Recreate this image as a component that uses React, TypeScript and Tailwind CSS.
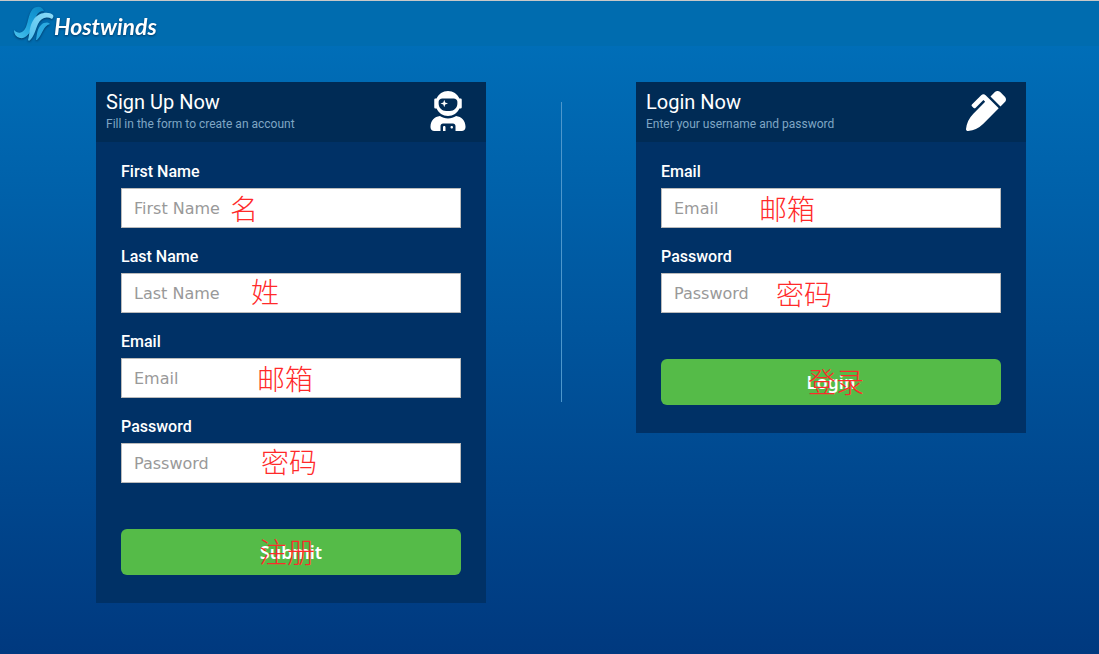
import { useId, type ReactNode } from "react";
import { FaPenAlt, FaUserAstronaut } from "react-icons/fa";

type FieldProps = {
  label: string;
  note: string;
  notePosition: string;
  type?: string;
};

const noteStyle =
  "pointer-events-none absolute text-[28px] leading-8 font-light whitespace-nowrap text-[#ff2a2a] font-['Noto_Sans_CJK_SC',sans-serif]";

function Field({ label, note, notePosition, type = "text" }: FieldProps) {
  const id = useId();
  return (
    <div className="flex flex-col gap-1">
      <label htmlFor={id} className="text-base leading-6 font-medium text-white">
        {label}
      </label>
      <div className="relative">
        <input
          id={id}
          type={type}
          placeholder={label}
          className="block h-10 w-full border border-[#bbbbbb] bg-white px-3 font-['DejaVu_Sans',sans-serif] text-base text-[#555555] outline-none placeholder:text-[#999999]"
        />
        <span className={`${noteStyle} ${notePosition}`}>{note}</span>
      </div>
    </div>
  );
}

type CardProps = {
  title: string;
  subtitle: string;
  icon: ReactNode;
  action: string;
  actionNote: string;
  actionNotePosition: string;
  children: ReactNode;
};

function Card({ title, subtitle, icon, action, actionNote, actionNotePosition, children }: CardProps) {
  return (
    <section className="bg-[#003166]">
      <header className="flex h-[60px] items-center justify-between bg-[#002b55] pr-5 pl-[10px]">
        <div>
          <h2 className="text-xl leading-6 text-white">{title}</h2>
          <p className="text-xs leading-5 text-[#7fa6c4]">{subtitle}</p>
        </div>
        <span className="pb-0.5 text-[40px] text-white">{icon}</span>
      </header>
      <form className="px-[25px] pt-[18px] pb-7" onSubmit={(event) => event.preventDefault()}>
        <div className="flex flex-col gap-[17px]">{children}</div>
        <div className="relative mt-[46px]">
          <button
            type="submit"
            className="h-[46px] w-full rounded-md bg-[#55bb48] font-['Noto_Sans',sans-serif] text-lg font-semibold text-white"
          >
            {action}
          </button>
          <span className={`${noteStyle} ${actionNotePosition}`}>{actionNote}</span>
        </div>
      </form>
    </section>
  );
}

function Logo() {
  return (
    <a href="#" aria-label="Hostwinds" className="flex items-center drop-shadow-[0px_1px_1px_rgba(0,20,50,0.6)]">
      <svg width="42" height="38" viewBox="0 0 42 38" aria-hidden="true">
        <defs>
          <linearGradient id="wave-dark" x1="0" y1="1" x2="1" y2="0">
            <stop offset="0" stopColor="#4cc3ee" />
            <stop offset="0.5" stopColor="#1aa0da" />
            <stop offset="1" stopColor="#0a86c4" />
          </linearGradient>
          <linearGradient id="wave-light" x1="0" y1="1" x2="1" y2="0">
            <stop offset="0" stopColor="#4fc0ee" />
            <stop offset="1" stopColor="#8edcf8" />
          </linearGradient>
        </defs>
        <path
          d="M2 25C6 29 11 29 14 22C17 15 17 3 25 2C28 1 31 3 32 6C26 6 24 10 22 18C19 29 13 34 8 33C4 32 2 29 2 25Z"
          fill="url(#wave-dark)"
        />
        <path
          d="M16 35C18 28 17 21 22 14C27 7 37 6 41 10C42 11 41 13 40 14C34 11 29 13 26 19C23 26 22 32 17 36Z"
          fill="url(#wave-light)"
        />
        <path d="M24 35C25 29 25 24 29 20C32 17 36 17 38 19C31 21 31 29 25 35Z" fill="#2aa9e0" />
      </svg>
      <span className="pt-1 font-['Lato',sans-serif] text-[23px] leading-8 font-bold text-white italic">Hostwinds</span>
    </a>
  );
}

export default function App() {
  return (
    <div className="min-h-screen border-t border-[#c8c8c8] bg-linear-to-b from-[#0072bc] to-[#00397f] font-['Roboto',sans-serif]">
      <header className="flex h-[45px] items-center bg-[#006caf] px-3">
        <Logo />
      </header>
      <main className="grid justify-center pt-9 pb-12 pl-[23px] md:grid-cols-[minmax(0,390px)_150px_minmax(0,390px)] md:items-start">
        <Card
          title="Sign Up Now"
          subtitle="Fill in the form to create an account"
          icon={<FaUserAstronaut className="w-9" />}
          action="Submit"
          actionNote="注册"
          actionNotePosition="left-[138px] top-1.5"
        >
          <Field label="First Name" note="名" notePosition="left-[109px] top-1" />
          <Field label="Last Name" note="姓" notePosition="left-[130px] top-0.5" />
          <Field label="Email" type="email" note="邮箱" notePosition="left-[136px] top-1" />
          <Field label="Password" type="password" note="密码" notePosition="left-[140px] top-0.5" />
        </Card>
        <div className="mt-5 hidden h-[300px] w-px justify-self-center bg-[#4d97cc] md:block" />
        <Card
          title="Login Now"
          subtitle="Enter your username and password"
          icon={<FaPenAlt />}
          action="Login"
          actionNote="登录"
          actionNotePosition="left-[147px] top-1.5"
        >
          <Field label="Email" type="email" note="邮箱" notePosition="left-[98px] top-1" />
          <Field label="Password" type="password" note="密码" notePosition="left-[115px] top-1" />
        </Card>
      </main>
    </div>
  );
}
